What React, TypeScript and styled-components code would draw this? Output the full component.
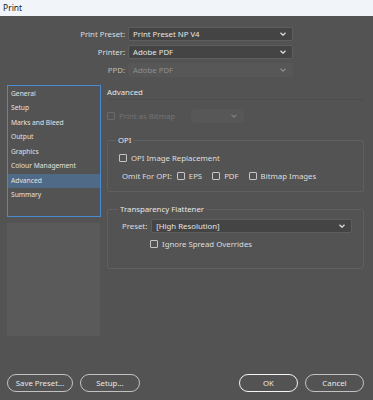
import * as React from 'react';
import styled, { createGlobalStyle } from 'styled-components';

const GlobalStyle = createGlobalStyle`
  * { box-sizing: border-box; }
  html, body { margin: 0; padding: 0; background: #535353; }
  body {
    font-family: "Noto Sans", "Open Sans", sans-serif;
    font-size: 7.8px;
    color: #dcdcdc;
  }
`;

const Dialog = styled.div`
  width: 373px;
  height: 400px;
  display: flex;
  flex-direction: column;
  background: #535353;
  overflow: hidden;
`;

const TitleBar = styled.div`
  height: 16px;
  flex: none;
  background: #f1f4f9;
  color: #1b1b1b;
  font-size: 8.5px;
  line-height: 16px;
  padding-left: 3px;
`;

const TopForm = styled.div`
  display: grid;
  grid-template-columns: 125px 165px;
  column-gap: 3px;
  row-gap: 4px;
  padding-top: 11px;
`;

const Label = styled.div<{ disabled?: boolean }>`
  text-align: right;
  line-height: 14px;
  color: ${(p) => (p.disabled ? '#bdbdbd' : '#dedede')};
`;

const Select = styled.div<{ disabled?: boolean; width?: number }>`
  height: 14px;
  width: ${(p) => (p.width ? `${p.width}px` : 'auto')};
  display: flex;
  align-items: center;
  justify-content: space-between;
  padding: 0 6px 0 4px;
  background: ${(p) => (p.disabled ? '#575757' : '#444444')};
  border: 1px solid ${(p) => (p.disabled ? '#575757' : '#5e5e5e')};
  border-radius: 2px;
  color: ${(p) => (p.disabled ? '#8e8e8e' : '#e4e4e4')};
  svg { flex: none; }
`;

const Main = styled.div`
  display: flex;
  margin-top: 8px;
  padding-left: 7px;
`;

const Sidebar = styled.div`
  width: 94px;
  flex: none;
  display: flex;
  flex-direction: column;
  gap: 6px;
`;

const NavList = styled.div`
  height: 132px;
  border: 1.5px solid #4a8ad0;
  padding-top: 0.5px;
`;

const NavItem = styled.div<{ active?: boolean }>`
  height: 14.5px;
  line-height: 14.5px;
  padding-left: 3px;
  font-size: 6.7px;
  color: #e2e2e2;
  background: ${(p) => (p.active ? '#4f6a86' : 'transparent')};
`;

const Preview = styled.div`
  width: 93px;
  height: 113px;
  background: #5a5a5a;
`;

const Panel = styled.div`
  width: 257px;
  margin-left: 6px;
  display: flex;
  flex-direction: column;
`;

const Heading = styled.div`
  height: 15px;
  line-height: 15px;
  color: #e6e6e6;
  border-bottom: 1px solid #4d4d4d;
`;

const Row = styled.div<{ indent?: number; disabled?: boolean }>`
  display: flex;
  align-items: center;
  gap: 4px;
  height: 14px;
  padding-left: ${(p) => p.indent ?? 0}px;
  color: ${(p) => (p.disabled ? '#747474' : '#dedede')};
`;

const Box = styled.span<{ disabled?: boolean; push?: number }>`
  width: 8px;
  height: 8px;
  flex: none;
  margin-left: ${(p) => p.push ?? 0}px;
  border: 1px solid ${(p) => (p.disabled ? '#6a6a6a' : '#c4c4c4')};
  border-radius: 1px;
`;

const Group = styled.fieldset<{ pad: number }>`
  margin: 0;
  padding: ${(p) => p.pad}px 0 0 0;
  border: 1px solid #5f5f5f;
  border-radius: 2px;
`;

const Legend = styled.legend<{ offset: number }>`
  padding: 0 2px;
  margin-left: ${(p) => p.offset}px;
  line-height: 10px;
  color: #e6e6e6;
`;

const Spacer = styled.div<{ h: number }>`
  height: ${(p) => p.h}px;
  flex: none;
`;

const Footer = styled.div`
  margin-top: auto;
  display: flex;
  gap: 7px;
  padding: 0 9px 8px 7px;
`;

const Button = styled.div<{ primary?: boolean; width: number }>`
  width: ${(p) => p.width}px;
  height: 18px;
  display: flex;
  align-items: center;
  justify-content: center;
  color: #e8e8e8;
  border: ${(p) => (p.primary ? '1.5px solid #f4f4f4' : '1px solid #c2c2c2')};
  border-radius: 9px;
`;

const Chevron: React.FC<{ color?: string }> = ({ color = '#dcdcdc' }) => (
  <svg width="6" height="4" viewBox="0 0 6 4">
    <path d="M0.5 0.8 L3 3.2 L5.5 0.8" fill="none" stroke={color} strokeWidth="1.3" />
  </svg>
);

const navItems = [
  'General',
  'Setup',
  'Marks and Bleed',
  'Output',
  'Graphics',
  'Colour Management',
  'Advanced',
  'Summary',
];

const App: React.FunctionComponent = () => {
  return (
    <Dialog>
      <GlobalStyle />
      <TitleBar>Print</TitleBar>
      <TopForm>
        <Label>Print Preset:</Label>
        <Select>
          Print Preset NP V4
          <Chevron />
        </Select>
        <Label>Printer:</Label>
        <Select>
          Adobe PDF
          <Chevron />
        </Select>
        <Label disabled>PPD:</Label>
        <Select disabled>
          Adobe PDF
          <Chevron color="#8a8a8a" />
        </Select>
      </TopForm>
      <Main>
        <Sidebar>
          <NavList>
            {navItems.map((item) => (
              <NavItem key={item} active={item === 'Advanced'}>
                {item}
              </NavItem>
            ))}
          </NavList>
          <Preview />
        </Sidebar>
        <Panel>
          <Heading>Advanced</Heading>
          <Spacer h={9} />
          <Row disabled>
            <Box disabled />
            <span style={{ width: 68 }}>Print as Bitmap</span>
            <Select disabled width={53}>
              <span />
              <Chevron color="#7c7c7c" />
            </Select>
          </Row>
          <Spacer h={12} />
          <Group pad={6}>
            <Legend offset={8}>OPI</Legend>
            <Row indent={11}>
              <Box />
              OPI Image Replacement
            </Row>
            <Spacer h={4} />
            <Row indent={14}>
              Omit For OPI:
              <Box push={1} />
              EPS
              <Box push={6} />
              PDF
              <Box push={6} />
              Bitmap Images
            </Row>
            <Spacer h={8} />
          </Group>
          <Spacer h={12} />
          <Group pad={5}>
            <Legend offset={10}>Transparency Flattener</Legend>
            <Row indent={14}>
              Preset:
              <Select width={201}>
                [High Resolution]
                <Chevron />
              </Select>
            </Row>
            <Spacer h={4} />
            <Row indent={42}>
              <Box />
              Ignore Spread Overrides
            </Row>
            <Spacer h={17} />
          </Group>
        </Panel>
      </Main>
      <Footer>
        <Button width={66}>Save Preset...</Button>
        <Button width={60}>Setup...</Button>
        <Button width={59} primary style={{ marginLeft: 'auto' }}>
          OK
        </Button>
        <Button width={59}>Cancel</Button>
      </Footer>
    </Dialog>
  );
};

export default App;
